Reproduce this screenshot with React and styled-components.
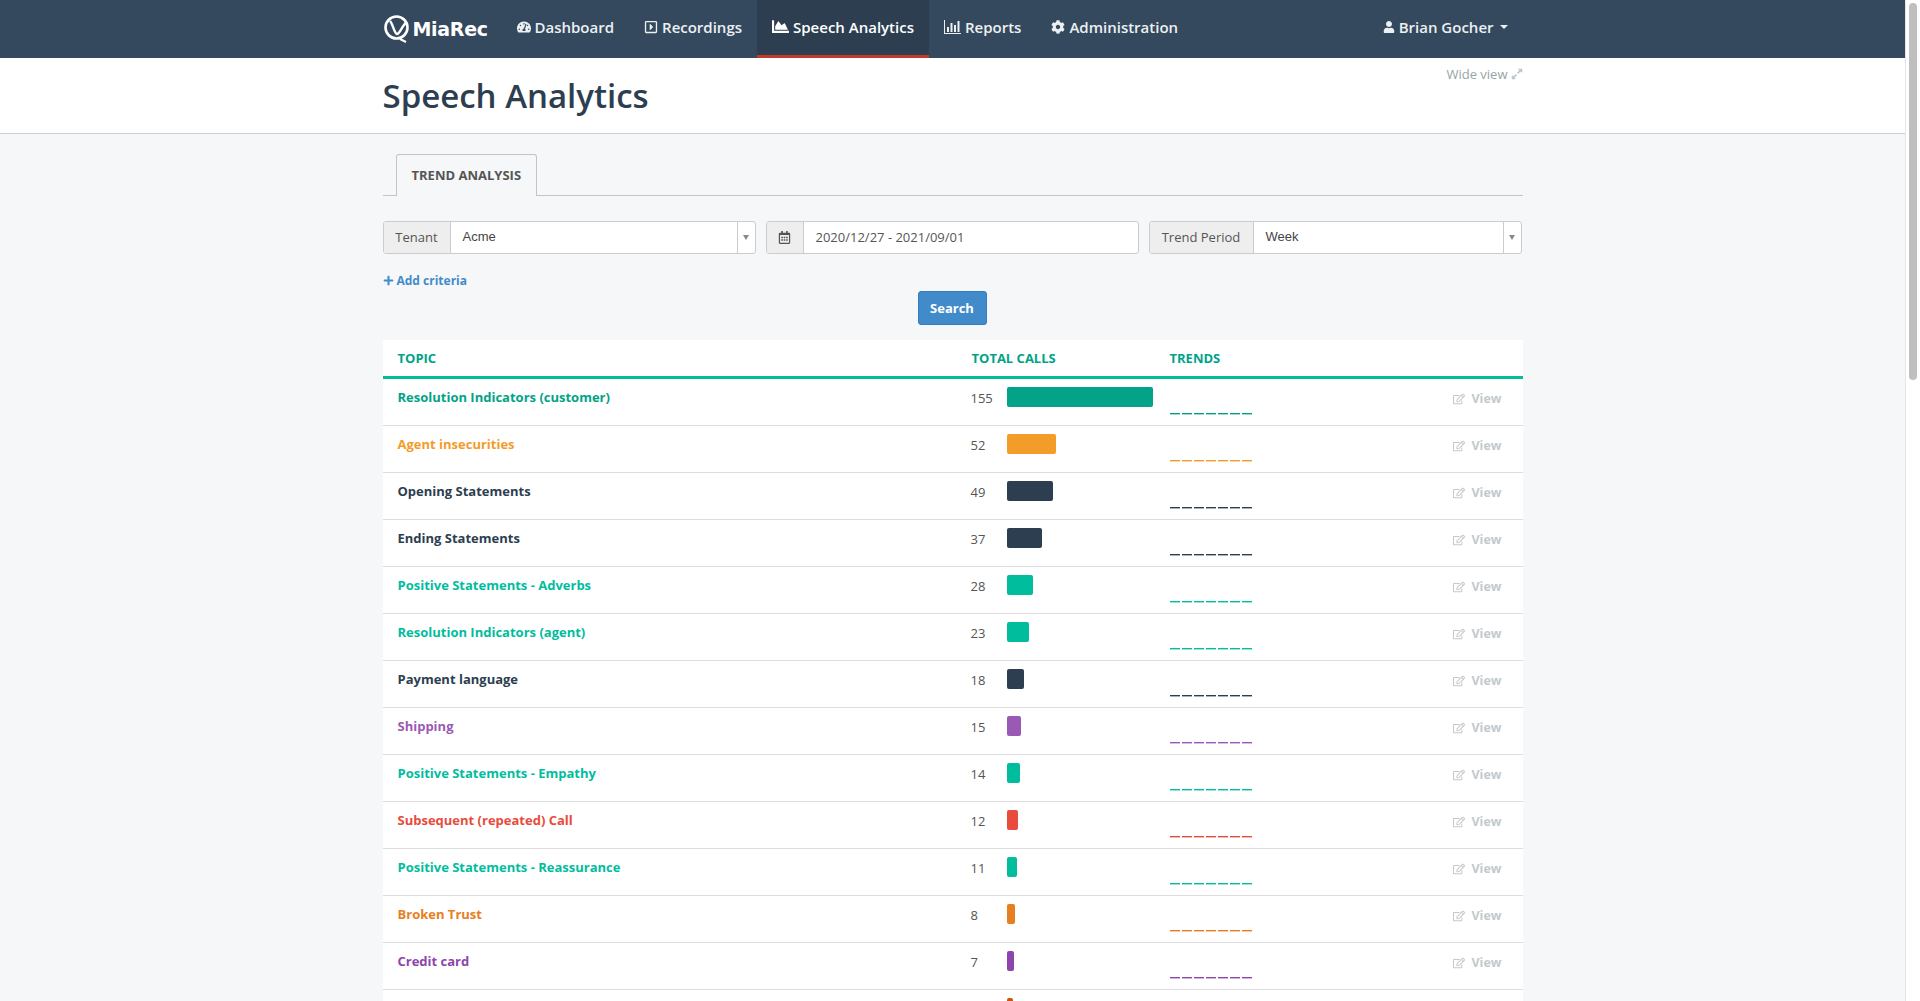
import React from 'react'
import styled, { createGlobalStyle } from 'styled-components'
import {
  FaTachometerAlt, FaRegCaretSquareRight, FaChartArea, FaCog, FaUser,
  FaRegCalendarAlt, FaPlus, FaRegEdit, FaExpandAlt,
} from 'react-icons/fa'

const GlobalStyle = createGlobalStyle`
  html, body {
    margin: 0;
    height: 100%;
    overflow: hidden;
    background: #f6f7f9;
    font-family: "Open Sans", "Liberation Sans", sans-serif;
    font-size: 13px;
    color: #555;
  }
  * { box-sizing: border-box; }
`

const Shell = styled.div`
  display: flex;
  height: 100vh;
  overflow: hidden;
`

const Main = styled.div`
  flex: 1;
  min-width: 0;
  overflow: hidden;
`

const ScrollTrack = styled.div`
  width: 15px;
  flex: none;
  background: #fff;
  border-left: 1px solid #e6e6e6;
  padding: 3px 3px 0 3px;
`

const ScrollThumb = styled.div`
  height: 377px;
  background: #bfbfbf;
  border-radius: 4px;
`

const Container = styled.div`
  width: 1140px;
  margin: 0 auto;
`

const Navbar = styled.nav`
  height: 58px;
  background: #34495e;
`

const NavInner = styled(Container)`
  display: flex;
  height: 100%;
`

const Logo = styled.div`
  width: 119px;
  display: flex;
  align-items: center;
  gap: 2px;
  color: #fff;
  font-family: "DejaVu Sans", sans-serif;
  font-weight: 700;
  font-size: 19px;
  letter-spacing: -0.3px;
`

const NavItem = styled.a`
  display: flex;
  align-items: center;
  gap: 4px;
  padding: 0 15px 2px;
  color: ${({ $active }) => ($active ? '#fff' : '#ecf0f1')};
  font-size: 15px;
  font-weight: 600;
  background: ${({ $active }) => ($active ? '#2c3e50' : 'transparent')};
  border-bottom: 3px solid ${({ $active }) => ($active ? '#c0392b' : 'transparent')};
`

const UserMenu = styled(NavItem)`
  margin-left: auto;
`

const Caret = styled.span`
  width: 0;
  height: 0;
  margin-left: 2px;
  border-left: 4px solid transparent;
  border-right: 4px solid transparent;
  border-top: 4px solid #ecf0f1;
`

const PageHeader = styled.header`
  height: 76px;
  background: #fff;
  border-bottom: 1px solid #cfcfcf;
`

const HeaderInner = styled(Container)`
  display: flex;
  justify-content: space-between;
  align-items: flex-start;
`

const Title = styled.h1`
  margin: 15px 0 0;
  font-size: 33px;
  line-height: 46px;
  font-weight: 600;
  color: #2c3e50;
`

const WideView = styled.a`
  display: flex;
  align-items: center;
  gap: 3px;
  margin-top: 7px;
  font-size: 13px;
  line-height: 18px;
  color: #95a5a6;
  svg { font-size: 12px; color: #bdc3c7; }
`

const Content = styled(Container)`
  padding-top: 20px;
`

const Tabs = styled.div`
  display: flex;
  height: 42px;
  padding-left: 13px;
  border-bottom: 1px solid #c4c4c4;
`

const Tab = styled.div`
  height: 42px;
  padding: 0 15px 2px;
  display: flex;
  align-items: center;
  background: #f6f7f9;
  border: 1px solid #c4c4c4;
  border-bottom: 0;
  border-radius: 3px 3px 0 0;
  font-size: 13px;
  font-weight: 700;
  color: #555;
  text-transform: uppercase;
`

const Filters = styled.div`
  display: grid;
  grid-template-columns: repeat(3, 373px);
  gap: 10px;
  margin-top: 25px;
`

const InputGroup = styled.div`
  display: flex;
  height: 33px;
  background: #fff;
  border: 1px solid #ccc;
  border-radius: 3px;
  overflow: hidden;
`

const Addon = styled.div`
  flex: none;
  width: ${({ $width }) => $width}px;
  padding-bottom: 1px;
  display: flex;
  align-items: center;
  justify-content: center;
  background: #eee;
  border-right: 1px solid #ccc;
  font-size: 13px;
  color: #555;
`

const Value = styled.div`
  flex: 1;
  padding: 0 12px 1px;
  display: flex;
  align-items: center;
  font-size: 13px;
  color: #555;
`

const SelectValue = styled(Value)`
  padding-bottom: 2px;
  font-family: "Liberation Sans", sans-serif;
  color: #444;
`

const SelectArrow = styled.div`
  flex: none;
  width: 18px;
  display: flex;
  align-items: center;
  justify-content: center;
  border-left: 1px solid #ccc;
  &::before {
    content: '';
    border-left: 3px solid transparent;
    border-right: 3px solid transparent;
    border-top: 5px solid #888;
  }
`

const AddCriteria = styled.a`
  display: flex;
  align-items: center;
  gap: 3px;
  margin-top: 17px;
  height: 18px;
  font-size: 12px;
  font-weight: 700;
  color: #428bca;
  svg { font-size: 11px; }
`

const SearchRow = styled.div`
  display: flex;
  justify-content: center;
  margin-top: 2px;
  padding-right: 1px;
`

const SearchButton = styled.button`
  width: 69px;
  height: 34px;
  padding: 0;
  background: #428bca;
  border: 1px solid #357ebd;
  border-radius: 3px;
  color: #fff;
  font-family: inherit;
  font-size: 13px;
  font-weight: 700;
`

const Table = styled.div`
  margin-top: 15px;
  background: #fff;
`

const HeadRow = styled.div`
  display: grid;
  grid-template-columns: 574px 198px 1fr;
  align-items: center;
  height: 39px;
  padding: 0 15px;
  border-bottom: 3px solid #00bd9d;
  font-size: 13px;
  font-weight: 700;
  color: #00a388;
  text-transform: uppercase;
`

const Row = styled.div`
  display: grid;
  grid-template-columns: 573px 199px 1fr auto;
  height: 47px;
  padding: 0 21px 0 15px;
  border-bottom: 1px solid #ddd;
`

const Topic = styled.a`
  padding-top: 9px;
  font-size: 13px;
  line-height: 18px;
  font-weight: 700;
  color: ${({ $color }) => $color};
`

const Calls = styled.div`
  display: flex;
  align-items: flex-start;
  padding-top: 8px;
`

const Count = styled.span`
  width: 36px;
  padding-top: 2px;
  font-size: 13px;
  line-height: 18px;
  color: #555;
`

const Bar = styled.div`
  height: 20px;
  background: ${({ $color }) => $color};
  border-radius: 2px;
`

const Trend = styled.svg`
  display: block;
  margin-top: 34px;
`

const ViewLink = styled.a`
  display: flex;
  align-items: flex-start;
  gap: 6px;
  padding-top: 11px;
  font-size: 12.5px;
  line-height: 18px;
  font-weight: 700;
  color: #c3c9cc;
  svg { font-size: 12px; margin-top: 3px; }
`

const DashIcon = styled(FaTachometerAlt)`font-size: 14px;`
const PlayIcon = styled(FaRegCaretSquareRight)`font-size: 14px;`
const AreaIcon = styled(FaChartArea)`font-size: 17px;`
const GearIcon = styled(FaCog)`font-size: 14px;`
const UserIcon = styled(FaUser)`font-size: 12px;`

const TOPICS = [
  { name: 'Resolution Indicators (customer)', count: 155, color: '#02a386' },
  { name: 'Agent insecurities', count: 52, color: '#f39c2a' },
  { name: 'Opening Statements', count: 49, color: '#2c3e50' },
  { name: 'Ending Statements', count: 37, color: '#2c3e50' },
  { name: 'Positive Statements - Adverbs', count: 28, color: '#00bd9d' },
  { name: 'Resolution Indicators (agent)', count: 23, color: '#00bd9d' },
  { name: 'Payment language', count: 18, color: '#2c3e50' },
  { name: 'Shipping', count: 15, color: '#9b59b6' },
  { name: 'Positive Statements - Empathy', count: 14, color: '#00bd9d' },
  { name: 'Subsequent (repeated) Call', count: 12, color: '#e74c3c' },
  { name: 'Positive Statements - Reassurance', count: 11, color: '#00bd9d' },
  { name: 'Broken Trust', count: 8, color: '#e67e22' },
  { name: 'Credit card', count: 7, color: '#8e44ad' },
  { count: 6, color: '#d35400', cut: true },
]

const MiaRecMark = () => (
  <svg width="28" height="30" viewBox="0 0 28 30" fill="none" stroke="#fff">
    <circle cx="13.5" cy="13.5" r="11" strokeWidth="2.6" />
    <path d="M7 7 C10 10 11 19 14 20 C17 20 19 11 24 8" strokeWidth="2.4" />
    <path d="M17 25 L23 28" strokeWidth="2" />
  </svg>
)

const BarsIcon = () => (
  <svg width="17" height="14" viewBox="0 0 17 14" fill="#ecf0f1">
    <rect x="0" y="0" width="1" height="14" />
    <rect x="0" y="13" width="17" height="1" />
    <rect x="3" y="7" width="2" height="5" />
    <rect x="6.5" y="3" width="2" height="9" />
    <rect x="10" y="5" width="2" height="7" />
    <rect x="13.5" y="1" width="2" height="11" />
  </svg>
)

const TrendLine = ({ color }) => (
  <Trend width="84" height="2">
    {[0, 1, 2, 3, 4, 5, 6].map((i) => (
      <rect key={i} x={i * 12} y="0" width="10" height="1.4" fill={color} />
    ))}
  </Trend>
)

const TopicRow = ({ name, count, color, cut }) => (
  <Row>
    <Topic $color={color}>{name}</Topic>
    <Calls>
      <Count>{!cut && count}</Count>
      <Bar $color={color} style={{ width: Math.round((count / 155) * 146) }} />
    </Calls>
    <TrendLine color={color} />
    {!cut && <ViewLink><FaRegEdit />View</ViewLink>}
  </Row>
)

export default function App() {
  return (
    <Shell>
      <GlobalStyle />
      <Main>
        <Navbar>
          <NavInner>
            <Logo><MiaRecMark />MiaRec</Logo>
            <NavItem><DashIcon />Dashboard</NavItem>
            <NavItem><PlayIcon />Recordings</NavItem>
            <NavItem $active><AreaIcon />Speech Analytics</NavItem>
            <NavItem><BarsIcon />Reports</NavItem>
            <NavItem><GearIcon />Administration</NavItem>
            <UserMenu><UserIcon />Brian Gocher<Caret /></UserMenu>
          </NavInner>
        </Navbar>
        <PageHeader>
          <HeaderInner>
            <Title>Speech Analytics</Title>
            <WideView>Wide view <FaExpandAlt /></WideView>
          </HeaderInner>
        </PageHeader>
        <Content>
          <Tabs><Tab>Trend Analysis</Tab></Tabs>
          <Filters>
            <InputGroup>
              <Addon $width={67}>Tenant</Addon>
              <SelectValue>Acme</SelectValue>
              <SelectArrow />
            </InputGroup>
            <InputGroup>
              <Addon $width={37}><FaRegCalendarAlt /></Addon>
              <Value>2020/12/27 - 2021/09/01</Value>
            </InputGroup>
            <InputGroup>
              <Addon $width={104}>Trend Period</Addon>
              <SelectValue>Week</SelectValue>
              <SelectArrow />
            </InputGroup>
          </Filters>
          <AddCriteria><FaPlus />Add criteria</AddCriteria>
          <SearchRow><SearchButton>Search</SearchButton></SearchRow>
          <Table>
            <HeadRow>
              <span>Topic</span>
              <span>Total Calls</span>
              <span>Trends</span>
            </HeadRow>
            {TOPICS.map((t) => <TopicRow key={t.count} {...t} />)}
          </Table>
        </Content>
      </Main>
      <ScrollTrack><ScrollThumb /></ScrollTrack>
    </Shell>
  )
}
